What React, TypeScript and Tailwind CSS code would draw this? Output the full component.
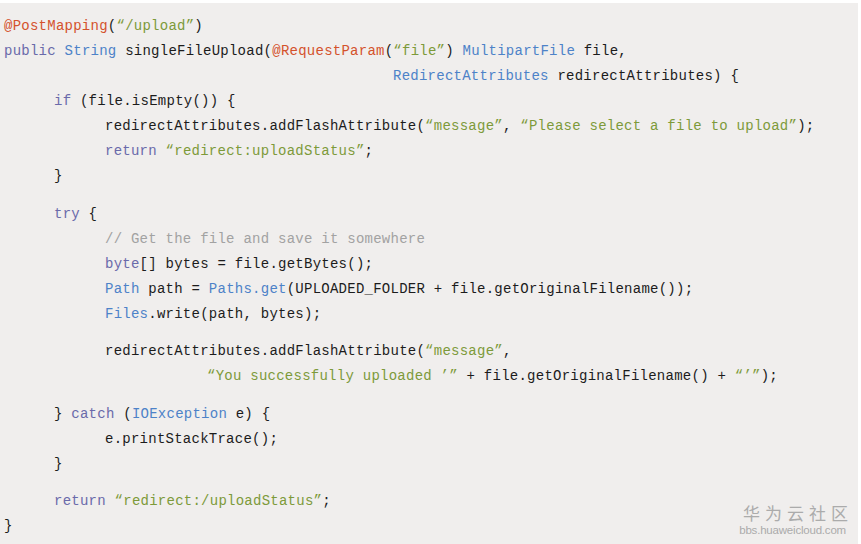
import React from "react";

type Seg = [string, string];

const K = "text-[#6a6aaa]"; // keyword
const T = "text-[#4d82c8]"; // type
const S = "text-[#7d9a3a]"; // string
const A = "text-[#d4522c]"; // annotation
const C = "text-[#a2a2a2]"; // comment
const D = "text-[#1c1c1c]"; // default

type Line = { pad: string; segs: Seg[] } | null;

const lines: Line[] = [
  { pad: "pl-[4px]", segs: [[A, "@PostMapping"], [D, "("], [S, "“/upload”"], [D, ")"]] },
  {
    pad: "pl-[4px]",
    segs: [
      [K, "public"], [D, " "], [T, "String"], [D, " singleFileUpload("], [A, "@RequestParam"], [D, "("], [S, "“file”"], [D, ") "], [T, "MultipartFile"], [D, " file,"],
    ],
  },
  { pad: "pl-[393px]", segs: [[T, "RedirectAttributes"], [D, " redirectAttributes) {"]] },
  { pad: "pl-[54px]", segs: [[K, "if"], [D, " (file.isEmpty()) {"]] },
  {
    pad: "pl-[105px]",
    segs: [[D, "redirectAttributes.addFlashAttribute("], [S, "“message”"], [D, ", "], [S, "“Please select a file to upload”"], [D, ");"]],
  },
  { pad: "pl-[105px]", segs: [[K, "return"], [D, " "], [S, "“redirect:uploadStatus”"], [D, ";"]] },
  { pad: "pl-[54px]", segs: [[D, "}"]] },
  null,
  { pad: "pl-[54px]", segs: [[K, "try"], [D, " {"]] },
  { pad: "pl-[105px]", segs: [[C, "// Get the file and save it somewhere"]] },
  { pad: "pl-[105px]", segs: [[K, "byte"], [D, "[] bytes = file.getBytes();"]] },
  {
    pad: "pl-[105px]",
    segs: [[T, "Path"], [D, " path = "], [T, "Paths.get"], [D, "(UPLOADED_FOLDER + file.getOriginalFilename());"]],
  },
  { pad: "pl-[105px]", segs: [[T, "Files"], [D, ".write(path, bytes);"]] },
  null,
  { pad: "pl-[105px]", segs: [[D, "redirectAttributes.addFlashAttribute("], [S, "“message”"], [D, ","]] },
  {
    pad: "pl-[207px]",
    segs: [[S, "“You successfully uploaded ’”"], [D, " + file.getOriginalFilename() + "], [S, "“’”"], [D, ");"]],
  },
  null,
  { pad: "pl-[54px]", segs: [[D, "} "], [K, "catch"], [D, " ("], [T, "IOException"], [D, " e) {"]] },
  { pad: "pl-[105px]", segs: [[D, "e.printStackTrace();"]] },
  { pad: "pl-[54px]", segs: [[D, "}"]] },
  null,
  { pad: "pl-[54px]", segs: [[K, "return"], [D, " "], [S, "“redirect:/uploadStatus”"], [D, ";"]] },
  { pad: "pl-[4px]", segs: [[D, "}"]] },
];

export default function App() {
  return (
    <div className="w-[861px] h-[544px] bg-white pt-[3px] pr-[3px] overflow-hidden">
      <div className="relative w-full h-full bg-[#f0eeed] pt-[11px] font-['Liberation_Mono',monospace] text-[14px] tracking-[0.25px]">
        <div className="flex flex-col">
          {lines.map((l, i) =>
            l === null ? (
              <div key={i} className="h-[12.5px]" />
            ) : (
              <div key={i} className={`h-[25px] leading-[25px] whitespace-pre ${l.pad}`}>
                {l.segs.map((s, j) => (
                  <span key={j} className={s[0]}>
                    {s[1]}
                  </span>
                ))}
              </div>
            )
          )}
        </div>
        <div className="absolute right-[12px] bottom-[7px] flex flex-col items-end gap-[2px] text-[#ababab] tracking-normal">
          <div className="text-[17px] leading-[18px] tracking-[5px] mr-[-7px] font-['Noto_Sans_CJK_SC',sans-serif]">华为云社区</div>
          <div className="text-[11.5px] leading-[13px] font-['Liberation_Sans',sans-serif] tracking-[-0.2px]">bbs.huaweicloud.com</div>
        </div>
      </div>
    </div>
  );
}
